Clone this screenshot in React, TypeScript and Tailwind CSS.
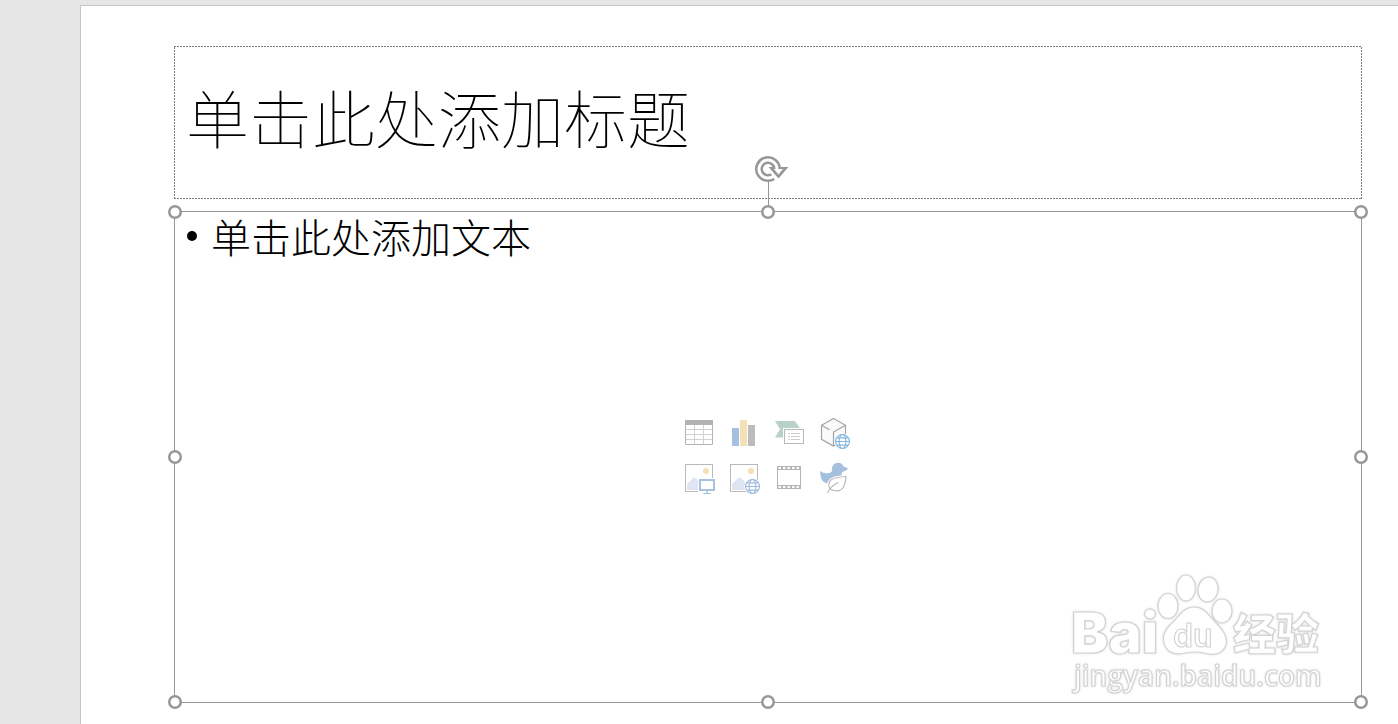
import type { ReactNode } from "react";

const handlePositions = [
  "left-0 top-0",
  "left-1/2 top-0",
  "left-full top-0",
  "left-0 top-1/2",
  "left-full top-1/2",
  "left-0 top-full",
  "left-1/2 top-full",
  "left-full top-full",
];

function Globe({ cx, cy, color }: { cx: number; cy: number; color: string }) {
  return (
    <g transform={`translate(${cx} ${cy})`} fill="none" stroke={color} strokeWidth="1.1">
      <circle r="8.3" fill="#fff" stroke="none" />
      <circle r="7" />
      <ellipse rx="3.4" ry="7" />
      <path d="M-7 0H7M-5.8-3.6H5.8M-5.8 3.6H5.8" />
    </g>
  );
}

function Picture() {
  return (
    <>
      <rect x="2.5" y="2.5" width="27" height="27" fill="#fff" stroke="#b9b9b9" />
      <circle cx="23" cy="9" r="3" fill="#f5dfb4" />
      <path d="M4 28V22L10 16.2Q11.5 15 13 16.2L21 24V28Z" fill="#dfe6f2" />
    </>
  );
}

const inserts: { label: string; icon: ReactNode }[] = [
  {
    label: "插入表格",
    icon: (
      <>
        <path d="M2 3H30V8H2Z" fill="#b3b3b3" />
        <path d="M3 12.5H29M3 17.5H29M3 22.5H29M11.5 8V27M20.5 8V27" stroke="#d2d2d2" />
        <path d="M2.5 8V27.5H29.5V8" stroke="#b3b3b3" fill="none" />
      </>
    ),
  },
  {
    label: "插入图表",
    icon: (
      <>
        <path d="M4 11H11V29H4Z" fill="#a5c0de" />
        <path d="M12 3H19V29H12Z" fill="#f5e1b8" />
        <path d="M20 8H27V29H20Z" fill="#bcbcbc" />
      </>
    ),
  },
  {
    label: "插入 SmartArt 图形",
    icon: (
      <>
        <path d="M2 4H22L27.5 12H10V20.5H2L7 12.2Z" fill="#b9d2c8" />
        <rect x="10" y="11" width="22" height="17" fill="#fff" />
        <rect x="11.5" y="12.5" width="19" height="14" fill="#fff" stroke="#b9b9b9" />
        <path d="M15 16.5H17M18 16.5H27M15 19.5H17M18 19.5H27M15 22.5H17M18 22.5H27" stroke="#cdcdcd" />
      </>
    ),
  },
  {
    label: "3D 模型",
    icon: (
      <>
        <path d="M15.5 1.5L27.5 8.3V22.3L15.5 29L3.5 22.3V8.3Z" fill="#fafafa" stroke="#a3a3a3" strokeWidth="1.2" />
        <path d="M3.5 8.3L11.5 12.7M27.5 8.3L15.5 15V29" fill="none" stroke="#a3a3a3" strokeWidth="1.2" />
        <Globe cx={24.5} cy={24.5} color="#82b6e2" />
      </>
    ),
  },
  {
    label: "图片",
    icon: (
      <>
        <Picture />
        <path d="M15 16H33V30H15Z" fill="#fff" />
        <rect x="17" y="18" width="14" height="10" fill="#fff" stroke="#9dbcdc" strokeWidth="1.8" />
        <path d="M24 29V31M20.5 31.5H27.5" stroke="#9dbcdc" strokeWidth="1.2" />
      </>
    ),
  },
  {
    label: "联机图片",
    icon: (
      <>
        <Picture />
        <Globe cx={24.5} cy={24.5} color="#9dbcdc" />
      </>
    ),
  },
  {
    label: "插入视频文件",
    icon: (
      <>
        <path d="M4 4H28V27H4Z" fill="#b5b5b5" />
        <path d="M5 8H27V23H5Z" fill="#fff" />
        <path d="M5.5 6H27M5.5 25H27" stroke="#fff" strokeWidth="2" strokeDasharray="2.5 2" />
      </>
    ),
  },
  {
    label: "插入图标",
    icon: (
      <>
        <path
          d="M2 9Q6 12 11 11Q15 10 14 7A6 6 0 0 1 25.500 4.500L30 6.200Q28 9.500 25 9.500Q23 11 23.500 14L15 18L9 21.500Q2 20 2 9Z"
          fill="#a5c0de"
        />
        <path
          d="M12 27Q9 21 13.500 17.500Q18 15 28 14.500Q28 20 25.500 25Q22.500 30 16 28.500Q14 28 12 27Z"
          fill="#fff" stroke="#fff" strokeWidth="3"
        />
        <path
          d="M12 27Q9 21 13.500 17.500Q18 15 28 14.500Q28 20 25.500 25Q22.500 30 16 28.500Q14 28 12 27ZM9.500 31Q13 23.500 20.500 20.500"
          fill="none" stroke="#b9b9b9" strokeWidth="1.2"
        />
      </>
    ),
  },
];

function RotateHandle() {
  return (
    <div className="absolute bottom-full left-1/2 flex w-10 -translate-x-1/2 flex-col items-center">
      <svg className="size-10 -mb-2" viewBox="-20 -21 40 40" aria-hidden="true">
        <circle r="12" fill="#fff" />
        <path d="M4.800 7.600A9 9 0 1 1 9 0" fill="none" stroke="#979797" strokeWidth="8" />
        <path d="M.5-2H20.500L10.500 9.500Z" fill="#979797" />
        <path d="M6.200 6.600A9 9 0 1 1 9 0" fill="none" stroke="#fff" strokeWidth="3" />
        <path d="M5.800 0H15L10.500 5.500Z" fill="#fff" />
      </svg>
      <span className="h-8 w-px bg-[#979797]" />
    </div>
  );
}

function Watermark() {
  return (
    <svg
      className="pointer-events-none absolute right-[34px] bottom-[2px] h-[130px] w-[260px]"
      viewBox="0 0 260 130"
      fill="#fff"
      stroke="#d3d3d3"
      strokeWidth="1.2"
      style={{ filter: "drop-shadow(0 0 1px #dcdcdc)" }}
    >
      <ellipse cx="101" cy="36" rx="10" ry="12.500" />
      <ellipse cx="119" cy="18" rx="9.500" ry="13" />
      <ellipse cx="141" cy="19.500" rx="10" ry="12.500" transform="rotate(10 141 19.5)" />
      <ellipse cx="155" cy="41" rx="10" ry="12" />
      <path d="M127 37C117 37 113 45 106 52C98 59 94 67 98 76C102 84 110 85 118 83Q127 81 137 83C147 86 156 84 159 75C161 66 155 59 148 52C141 45 138 37 127 37Z" />
      <g className="[font-family:Inter,'Liberation_Sans',sans-serif]">
        <text x="4" y="83" fontSize="56" fontWeight="900">Bai</text>
        <text x="106" y="77" fontSize="32" fontWeight="600">du</text>
      </g>
      <text x="166" y="80" fontSize="43" className="[font-family:'Noto_Sans_CJK_SC',sans-serif] font-black">经验</text>
      <text x="7" y="116" fontSize="28" className="[font-family:'Open_Sans',sans-serif] font-semibold">jingyan.baidu.com</text>
    </svg>
  );
}

export default function App() {
  return (
    <div className="flex min-h-screen flex-col bg-[#e6e6e6] pt-[5px] pl-20 [font-family:'Noto_Sans_CJK_SC',sans-serif] text-black">
      <main className="flex flex-1 flex-col gap-3 border-t border-l border-[#c6c6c6] bg-white pt-10 pr-9 pb-[21px] pl-[93px]">
        <section className="flex h-[153px] items-center bg-[repeating-linear-gradient(90deg,#7f7f7f_0_2px,transparent_2px_3px),repeating-linear-gradient(90deg,#7f7f7f_0_2px,transparent_2px_3px),repeating-linear-gradient(0deg,#7f7f7f_0_2px,transparent_2px_3px),repeating-linear-gradient(0deg,#7f7f7f_0_2px,transparent_2px_3px)] bg-[length:100%_1px,100%_1px,1px_100%,1px_100%] bg-[position:top,bottom,left,right] bg-no-repeat px-3 pb-3.5">
          <h1 className="text-[63px] leading-[72px] font-thin">单击此处添加标题</h1>
        </section>
        <section className="relative grid flex-1 border border-[#979797]">
          <ul className="col-start-1 row-start-1 px-3">
            <li className="flex items-center gap-3.5 text-[40px] leading-[48px] font-light">
              <span className="size-2.5 rounded-full bg-black" />
              单击此处添加文本
            </li>
          </ul>
          <div className="col-start-1 row-start-1 grid grid-cols-4 gap-2.5 place-self-center">
            {inserts.map(({ label, icon }) => (
              <button key={label} type="button" aria-label={label} className="size-[35px]">
                <svg className="size-full" viewBox="0 0 35 35" aria-hidden="true">
                  {icon}
                </svg>
              </button>
            ))}
          </div>
          <Watermark />
          <RotateHandle />
          {handlePositions.map((position) => (
            <svg
              key={position}
              viewBox="0 0 14 14"
              aria-hidden="true"
              className={`absolute size-3.5 -translate-x-1/2 -translate-y-1/2 ${position}`}
            >
              <circle cx="7" cy="7" r="5.75" fill="#fff" stroke="#979797" strokeWidth="2.5" />
            </svg>
          ))}
        </section>
      </main>
    </div>
  );
}
